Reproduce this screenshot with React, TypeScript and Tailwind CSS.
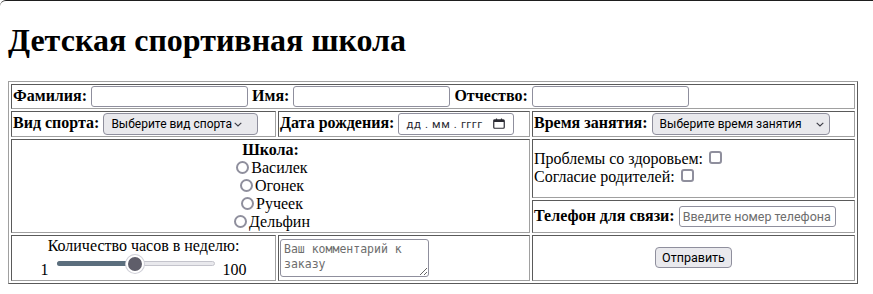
import React from 'react';

const cell =
  'p-px border border-t-[#5a5a5a] border-l-[#5a5a5a] border-r-[#a0a0a0] border-b-[#a0a0a0]';
const field =
  "w-[157px] h-[21px] px-[3px] bg-white border border-[#8f8f9d] rounded-[3px] font-['Roboto',sans-serif] text-[12.5px] text-black placeholder:text-[#6d6d6d] outline-none";
const selectBox =
  "appearance-none h-[22px] pl-[7px] bg-[#e9e9ed] border border-[#8f8f9d] rounded-[4px] font-['Roboto',sans-serif] text-[12px] text-black outline-none";

const Chevron: React.FC<{ className: string }> = ({ className }) => (
  <svg
    className={className}
    width="8"
    height="5"
    viewBox="0 0 8 5"
    fill="none"
    stroke="#3b3b45"
    strokeWidth="1.1"
  >
    <path d="M0.7 0.8 L4 4 L7.3 0.8" />
  </svg>
);

const CalendarIcon: React.FC = () => (
  <svg width="12" height="11" viewBox="0 0 12 11" fill="none" className="ml-auto">
    <rect x="0.75" y="1.75" width="10.5" height="8.5" rx="1" stroke="#2b2b33" strokeWidth="1.2" />
    <rect x="1" y="2" width="10" height="2" fill="#2b2b33" />
    <path d="M3.5 0.5 V2.5 M8.5 0.5 V2.5" stroke="#2b2b33" strokeWidth="1.2" />
  </svg>
);

const schools = ['Василек', 'Огонек', 'Ручеек', 'Дельфин'];

const App: React.FC = () => {
  return (
    <div className="min-h-screen bg-white border-t border-[#1e1e1e] rounded-tl-[6px] px-2 font-['Liberation_Serif',serif] text-[16px] leading-[normal] text-black">
      <h1 className="mt-[21.44px] mb-[21.44px] text-[32px] font-bold">Детская спортивная школа</h1>

      <form onSubmit={(e) => e.preventDefault()}>
        <table className="w-[850px] border-separate border-spacing-[2px] border border-t-[#a0a0a0] border-l-[#a0a0a0] border-r-[#5a5a5a] border-b-[#5a5a5a]">
          <tbody>
            <tr>
              <td colSpan={3} className={cell}>
                <label htmlFor="lastName" className="font-bold">Фамилия:</label>{' '}
                <input id="lastName" type="text" className={field} />{' '}
                <label htmlFor="firstName" className="font-bold">Имя:</label>{' '}
                <input id="firstName" type="text" className={field} />{' '}
                <label htmlFor="middleName" className="font-bold">Отчество:</label>{' '}
                <input id="middleName" type="text" className={field} />
              </td>
            </tr>

            <tr>
              <td className={`${cell} w-[265px]`}>
                <label htmlFor="sport" className="font-bold">Вид спорта:</label>{' '}
                <span className="relative inline-block">
                  <select id="sport" className={`${selectBox} w-[155px]`}>
                    <option>Выберите вид спорта</option>
                    <option>Футбол</option>
                    <option>Плавание</option>
                    <option>Гимнастика</option>
                  </select>
                  <Chevron className="absolute right-[16px] top-[9px] pointer-events-none" />
                </span>
              </td>
              <td className={`${cell} w-[252px]`}>
                <label className="font-bold">Дата рождения:</label>{' '}
                <span
                  role="textbox"
                  className="inline-flex items-center w-[116px] h-[22px] pl-[7px] pr-[8px] bg-white border border-[#8f8f9d] rounded-[3px] font-['Roboto',sans-serif] text-[11.5px] tracking-[0.6px] text-[#2b2b33]"
                >
                  <span>дд . мм . гггг</span>
                  <CalendarIcon />
                </span>
              </td>
              <td className={`${cell} w-[323px]`}>
                <label htmlFor="time" className="font-bold">Время занятия:</label>{' '}
                <span className="relative inline-block">
                  <select id="time" className={`${selectBox} w-[178px]`}>
                    <option>Выберите время занятия</option>
                    <option>Утро</option>
                    <option>День</option>
                    <option>Вечер</option>
                  </select>
                  <Chevron className="absolute right-[6px] top-[9px] pointer-events-none" />
                </span>
              </td>
            </tr>

            <tr>
              <td colSpan={2} rowSpan={2} className={`${cell} text-center`}>
                <b>Школа:</b>
                {schools.map((s) => (
                  <React.Fragment key={s}>
                    <br />
                    <label>
                      <input
                        type="radio"
                        name="school"
                        value={s}
                        className="appearance-none w-[13px] h-[13px] ml-[3px] mr-[2px] align-[-1px] rounded-full bg-white border-2 border-[#8f8f9d]"
                      />
                      {s}
                    </label>
                  </React.Fragment>
                ))}
              </td>
              <td className={`${cell} h-[58px]`}>
                <label>
                  Проблемы со здоровьем:{' '}
                  <input
                    type="checkbox"
                    className="appearance-none w-[13px] h-[13px] ml-[2px] mr-[3px] align-baseline rounded-[3px] bg-white border-2 border-[#8f8f9d]"
                  />
                </label>
                <br />
                <label>
                  Согласие родителей:{' '}
                  <input
                    type="checkbox"
                    className="appearance-none w-[13px] h-[13px] ml-[2px] mr-[3px] align-baseline rounded-[3px] bg-white border-2 border-[#8f8f9d]"
                  />
                </label>
              </td>
            </tr>
            <tr>
              <td className={`${cell} h-[33px]`}>
                <label htmlFor="phone" className="font-bold">Телефон для связи:</label>{' '}
                <input id="phone" type="tel" placeholder="Введите номер телефона" className={field} />
              </td>
            </tr>

            <tr>
              <td className={`${cell} text-center`}>
                Количество часов в неделю:
                <br />
                1{' '}
                <span role="slider" aria-valuemin={1} aria-valuemax={100} aria-valuenow={50} className="relative inline-block w-[162px] h-[20px] mx-[2px]">
                  <span className="absolute left-[2px] right-[2px] top-[6px] h-[5px] rounded-full bg-[#e9e9ed] border border-[#c4c4cc]" />
                  <span className="absolute left-[2px] w-[80px] top-[6px] h-[5px] rounded-full bg-[#5b6e7d]" />
                  <span className="absolute left-[71px] top-0 w-[18px] h-[18px] rounded-full bg-[#5f5e6a] border-2 border-white shadow-[0_0_0_1px_#d0d0d8]" />
                </span>{' '}
                100
              </td>
              <td className={cell}>
                <textarea
                  placeholder="Ваш комментарий к заказу"
                  className="w-[149px] h-[38px] px-[3px] py-[2px] align-middle resize bg-white border border-[#8f8f9d] rounded-[3px] font-['DejaVu_Sans_Mono',monospace] text-[11.5px] leading-[15px] placeholder:text-[#6d6d6d] outline-none"
                />
              </td>
              <td className={`${cell} text-center`}>
                <button
                  type="submit"
                  className="h-[21px] px-[6px] bg-[#e9e9ed] border border-[#8f8f9d] rounded-[4px] font-['Roboto',sans-serif] text-[12.5px] leading-none text-black"
                >
                  Отправить
                </button>
              </td>
            </tr>
          </tbody>
        </table>
      </form>
    </div>
  );
};

export default App;
